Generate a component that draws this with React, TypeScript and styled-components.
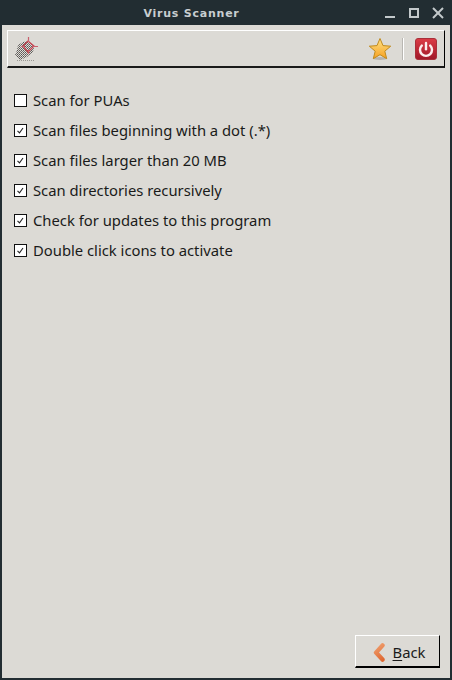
import styled, { createGlobalStyle } from "styled-components"
import { X } from "lucide-react"

const GlobalStyle = createGlobalStyle`
  html, body {
    margin: 0;
    padding: 0;
    background: #222d32;
  }
`

const Win = styled.div`
  width: 452px;
  height: 680px;
  box-sizing: border-box;
  display: flex;
  flex-direction: column;
  background: #222d32;
  padding: 0 2px 2px 2px;
  font-family: "Noto Sans", sans-serif;
`

const TitleBar = styled.div`
  height: 25px;
  box-sizing: border-box;
  flex: none;
  display: flex;
  align-items: center;
  justify-content: center;
  padding: 2px 69px 0 0;
  position: relative;
`

const Title = styled.div`
  font-family: "DejaVu Sans", sans-serif;
  font-weight: bold;
  font-size: 11px;
  letter-spacing: 0.77px;
  color: #c8ced0;
`

const WinButtons = styled.div`
  position: absolute;
  right: 7px;
  top: 8px;
  display: flex;
  align-items: flex-end;
  gap: 14px;
  color: #c3c9cb;
`

const Minimize = styled.div`
  width: 10px;
  height: 2px;
  background: currentColor;
`

const Maximize = styled.div`
  width: 10px;
  height: 10px;
  box-sizing: border-box;
  border: 2px solid currentColor;
`

const CloseIcon = styled(X)`
  margin: -5px;
`

const Body = styled.div`
  flex: 1;
  display: flex;
  flex-direction: column;
  background: #dcdad5;
  padding: 5px;
  min-height: 0;
`

const Toolbar = styled.div`
  height: 38px;
  box-sizing: border-box;
  flex: none;
  display: flex;
  align-items: center;
  border-top: 1px solid #fff;
  border-left: 1px solid #fff;
  border-right: 1px solid #000;
  border-bottom: 2px solid #1a1a1a;
  padding: 0 7px 0 5px;
`

const Spacer = styled.div`
  flex: 1;
`

const Separator = styled.div`
  width: 1px;
  height: 22px;
  margin: 0 11px;
  background: #fff;
  box-shadow: -1px 0 0 #b9b7b2;
`

const Options = styled.div`
  flex: 1;
  display: flex;
  flex-direction: column;
  gap: 8px;
  padding: 21px 0 0 7px;
`

const Option = styled.label`
  height: 22px;
  display: flex;
  align-items: center;
  gap: 6px;
  font-size: 14.8px;
  color: #1a1a1a;
`

const Box = styled.span`
  width: 13px;
  height: 13px;
  box-sizing: border-box;
  flex: none;
  border: 1px solid #111;
  background: #fff;
  display: flex;
`

const Footer = styled.div`
  flex: none;
  display: flex;
  justify-content: flex-end;
`

const BackButton = styled.button`
  width: 85px;
  height: 33px;
  box-sizing: border-box;
  margin: 0 5px 5px 0;
  display: flex;
  align-items: center;
  justify-content: center;
  gap: 8px;
  padding: 2px 0 0 3px;
  background: #dcdad5;
  border-top: 1px solid #fff;
  border-left: 1px solid #fff;
  border-right: 1px solid #000;
  border-bottom: 2px solid #000;
  font: 14.8px "Noto Sans", sans-serif;
  color: #1a1a1a;

  u {
    text-underline-offset: 2px;
  }
`

const options = [
  { label: "Scan for PUAs", checked: false },
  { label: "Scan files beginning with a dot (.*)", checked: true },
  { label: "Scan files larger than 20 MB", checked: true },
  { label: "Scan directories recursively", checked: true },
  { label: "Check for updates to this program", checked: true },
  { label: "Double click icons to activate", checked: true },
]

function ScanIcon() {
  return (
    <svg width="26" height="26" viewBox="0 0 26 26">
      <defs>
        <pattern id="dither" width="2" height="2" patternUnits="userSpaceOnUse">
          <rect width="2" height="2" fill="#dedcd8" />
          <rect width="1" height="1" fill="#5a5754" />
          <rect x="1" y="1" width="1" height="1" fill="#74716d" />
        </pattern>
      </defs>
      <path d="M5 9 L10 6 L16 5 L21 11 L20 16 L14 21 L7 24 L2 19 L4 14 Z" fill="url(#dither)" />
      <path d="M4 24.5 H22" stroke="#9a9893" strokeDasharray="1 1" strokeWidth="1" />
      <path d="M15 5 L21 10 L15 16 L10 10 Z" fill="none" stroke="#c9404f" strokeWidth="1.2" />
      <path d="M15.5 1 V6 M15.5 14 V18 M8 10.5 H12 M19 10.5 H25" stroke="#c9606c" strokeWidth="1.2" />
    </svg>
  )
}

function StarIcon() {
  return (
    <svg width="24" height="24" viewBox="0 0 24 24">
      <defs>
        <linearGradient id="star" x1="0" y1="0" x2="0" y2="1">
          <stop offset="0" stopColor="#fde38a" />
          <stop offset="1" stopColor="#f8a01e" />
        </linearGradient>
      </defs>
      <ellipse cx="12" cy="21.5" rx="7" ry="1.5" fill="#b5b3ae" />
      <path
        d="M12 1.5 L15 8.6 L22.7 9.2 L16.8 14.2 L18.7 21.7 L12 17.7 L5.3 21.7 L7.2 14.2 L1.3 9.2 L9 8.6 Z"
        fill="url(#star)"
        stroke="#c08a1e"
        strokeWidth="1"
        strokeLinejoin="round"
      />
    </svg>
  )
}

function PowerIcon() {
  return (
    <svg width="22" height="22" viewBox="0 0 22 22">
      <defs>
        <linearGradient id="power" x1="0" y1="0" x2="0" y2="1">
          <stop offset="0" stopColor="#dc3c46" />
          <stop offset="1" stopColor="#a01828" />
        </linearGradient>
      </defs>
      <rect x="0.5" y="0.5" width="21" height="21" rx="2.5" fill="url(#power)" stroke="#a8303a" />
      <path d="M6.8 7.6 A6 6 0 1 0 15.2 7.6" fill="none" stroke="#fbeeee" strokeWidth="2.4" strokeLinecap="round" />
      <path d="M11 5 V11.2" stroke="#fbeeee" strokeWidth="2.4" strokeLinecap="round" />
    </svg>
  )
}

function BackIcon() {
  return (
    <svg width="12" height="19" viewBox="0 0 12 19">
      <defs>
        <linearGradient id="back" gradientUnits="userSpaceOnUse" x1="0" y1="0" x2="12" y2="19">
          <stop offset="0" stopColor="#f2a878" />
          <stop offset="1" stopColor="#dc5f28" />
        </linearGradient>
      </defs>
      <path d="M9.5 2.4 L3 9.6 L9.5 16.6" fill="none" stroke="url(#back)" strokeWidth="4.4" strokeLinecap="round" strokeLinejoin="round" />
    </svg>
  )
}

function CheckMark() {
  return (
    <svg width="11" height="11" viewBox="0 0 11 11">
      <path d="M2.5 5.8 L4.5 7.8 L8 3" fill="none" stroke="#222" strokeWidth="1.1" />
    </svg>
  )
}

export default function App() {
  return (
    <Win>
      <GlobalStyle />
      <TitleBar>
        <Title>Virus Scanner</Title>
        <WinButtons>
          <Minimize />
          <Maximize />
          <CloseIcon size={20} strokeWidth={2.4} strokeLinecap="butt" />
        </WinButtons>
      </TitleBar>
      <Body>
        <Toolbar>
          <ScanIcon />
          <Spacer />
          <StarIcon />
          <Separator />
          <PowerIcon />
        </Toolbar>
        <Options>
          {options.map((o) => (
            <Option key={o.label}>
              <Box>{o.checked && <CheckMark />}</Box>
              {o.label}
            </Option>
          ))}
        </Options>
        <Footer>
          <BackButton>
            <BackIcon />
            <span>
              <u>B</u>ack
            </span>
          </BackButton>
        </Footer>
      </Body>
    </Win>
  )
}
